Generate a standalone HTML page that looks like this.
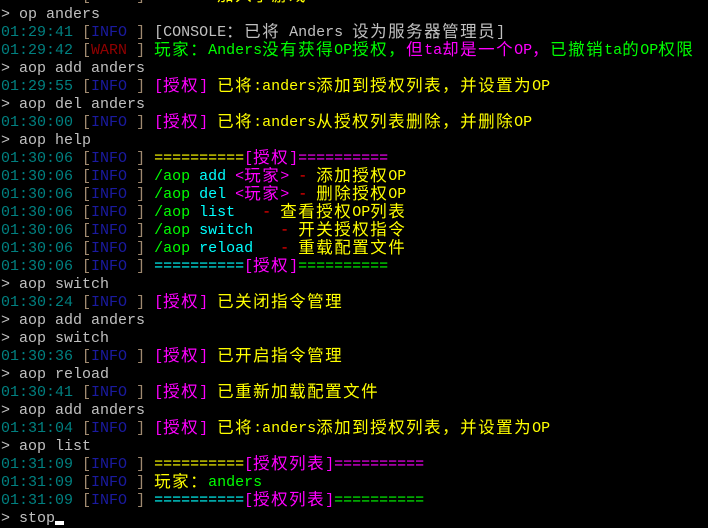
<!DOCTYPE html>
<html><head><meta charset="utf-8"><style>
html,body{margin:0;padding:0;background:#000;width:708px;height:526px;overflow:hidden}
pre{margin:0;position:absolute;top:-12px;left:1px;font-family:"Liberation Mono","DejaVu Sans Mono",monospace;font-size:15px;line-height:18px;color:#c0c0c0;white-space:pre}
.c{font-family:"Noto Sans CJK SC","WenQuanYi Zen Hei",sans-serif;font-size:16.5px;letter-spacing:1.5px;line-height:0;position:relative;top:1px}
.t{color:#008080}.b{color:#a08a70}.i{color:#1a1aa0}.w{color:#900000}
.y{color:#ffff00}.m{color:#ff00ff}.g{color:#00ff00}.cy{color:#00ffff}.r{color:#ff0000}.gr{color:#c0c0c0}
.cur{display:inline-block;width:9px;height:4px;background:#fff;vertical-align:-3px;line-height:0}
</style></head><body><pre><span class="t">01:29:36</span> <span class="b">[</span><span class="i">INFO</span> <span class="b">]</span> <span class="y">Anders <span class="c">加入了游戏</span></span>
&gt; op anders
<span class="t">01:29:41</span> <span class="b">[</span><span class="i">INFO</span> <span class="b">]</span> <span class="gr">[CONSOLE<span class="c">：</span><span class="c">已将</span> Anders <span class="c">设为服务器管理员</span>]</span>
<span class="t">01:29:42</span> <span class="b">[</span><span class="w">WARN</span> <span class="b">]</span> <span class="g"><span class="c">玩家：</span>Anders<span class="c">没有获得</span>OP<span class="c">授权，</span></span><span class="m"><span class="c">但</span>ta<span class="c">却是一个</span>OP<span class="c">，</span></span><span class="g"><span class="c">已撤销</span>ta<span class="c">的</span>OP<span class="c">权限</span></span>
&gt; aop add anders
<span class="t">01:29:55</span> <span class="b">[</span><span class="i">INFO</span> <span class="b">]</span> <span class="m">[<span class="c">授权</span>]</span> <span class="y"><span class="c">已将</span>:anders<span class="c">添加到授权列表，并设置为</span>OP</span>
&gt; aop del anders
<span class="t">01:30:00</span> <span class="b">[</span><span class="i">INFO</span> <span class="b">]</span> <span class="m">[<span class="c">授权</span>]</span> <span class="y"><span class="c">已将</span>:anders<span class="c">从授权列表删除，并删除</span>OP</span>
&gt; aop help
<span class="t">01:30:06</span> <span class="b">[</span><span class="i">INFO</span> <span class="b">]</span> <span class="y">==========</span><span class="m">[<span class="c">授权</span>]==========</span>
<span class="t">01:30:06</span> <span class="b">[</span><span class="i">INFO</span> <span class="b">]</span> <span class="g">/aop</span> <span class="cy">add</span> <span class="m">&lt;<span class="c">玩家</span>&gt;</span> <span class="r">-</span> <span class="y"><span class="c">添加授权</span>OP</span>
<span class="t">01:30:06</span> <span class="b">[</span><span class="i">INFO</span> <span class="b">]</span> <span class="g">/aop</span> <span class="cy">del</span> <span class="m">&lt;<span class="c">玩家</span>&gt;</span> <span class="r">-</span> <span class="y"><span class="c">删除授权</span>OP</span>
<span class="t">01:30:06</span> <span class="b">[</span><span class="i">INFO</span> <span class="b">]</span> <span class="g">/aop</span> <span class="cy">list</span>   <span class="r">-</span> <span class="y"><span class="c">查看授权</span>OP<span class="c">列表</span></span>
<span class="t">01:30:06</span> <span class="b">[</span><span class="i">INFO</span> <span class="b">]</span> <span class="g">/aop</span> <span class="cy">switch</span>   <span class="r">-</span> <span class="y"><span class="c">开关授权指令</span></span>
<span class="t">01:30:06</span> <span class="b">[</span><span class="i">INFO</span> <span class="b">]</span> <span class="g">/aop</span> <span class="cy">reload</span>   <span class="r">-</span> <span class="y"><span class="c">重载配置文件</span></span>
<span class="t">01:30:06</span> <span class="b">[</span><span class="i">INFO</span> <span class="b">]</span> <span class="cy">==========</span><span class="m">[<span class="c">授权</span>]</span><span class="g">==========</span>
&gt; aop switch
<span class="t">01:30:24</span> <span class="b">[</span><span class="i">INFO</span> <span class="b">]</span> <span class="m">[<span class="c">授权</span>]</span> <span class="y"><span class="c">已关闭指令管理</span></span>
&gt; aop add anders
&gt; aop switch
<span class="t">01:30:36</span> <span class="b">[</span><span class="i">INFO</span> <span class="b">]</span> <span class="m">[<span class="c">授权</span>]</span> <span class="y"><span class="c">已开启指令管理</span></span>
&gt; aop reload
<span class="t">01:30:41</span> <span class="b">[</span><span class="i">INFO</span> <span class="b">]</span> <span class="m">[<span class="c">授权</span>]</span> <span class="y"><span class="c">已重新加载配置文件</span></span>
&gt; aop add anders
<span class="t">01:31:04</span> <span class="b">[</span><span class="i">INFO</span> <span class="b">]</span> <span class="m">[<span class="c">授权</span>]</span> <span class="y"><span class="c">已将</span>:anders<span class="c">添加到授权列表，并设置为</span>OP</span>
&gt; aop list
<span class="t">01:31:09</span> <span class="b">[</span><span class="i">INFO</span> <span class="b">]</span> <span class="y">==========</span><span class="m">[<span class="c">授权列表</span>]==========</span>
<span class="t">01:31:09</span> <span class="b">[</span><span class="i">INFO</span> <span class="b">]</span> <span class="y"><span class="c">玩家：</span></span><span class="g">anders</span>
<span class="t">01:31:09</span> <span class="b">[</span><span class="i">INFO</span> <span class="b">]</span> <span class="cy">==========</span><span class="m">[<span class="c">授权列表</span>]</span><span class="g">==========</span>
&gt; stop<span class="cur"></span></pre></body></html>
